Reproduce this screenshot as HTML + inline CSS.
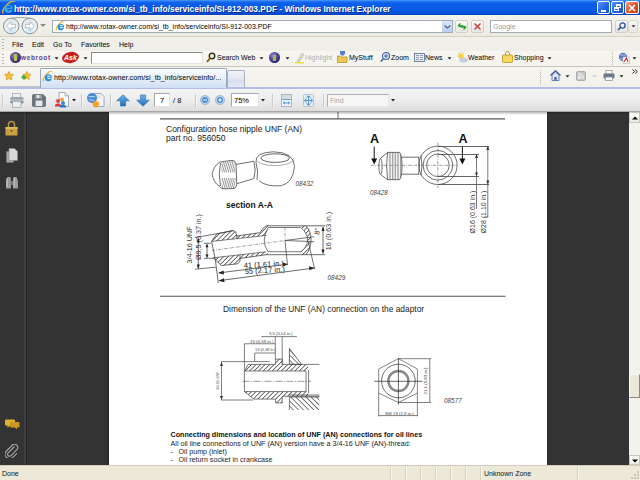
<!DOCTYPE html>
<html><head><meta charset="utf-8">
<style>
*{margin:0;padding:0;box-sizing:border-box}
html,body{width:640px;height:480px;overflow:hidden;background:#fff;font-family:"Liberation Sans",sans-serif}
.a{position:absolute}
.t{position:absolute;white-space:nowrap;line-height:1}
#title{left:0;top:0;width:640px;height:15px;background:linear-gradient(#4a9cff 0px,#2272f2 1.5px,#0c5fea 3px,#0a5ae6 10px,#0650dc 13px,#0040c0 15px)}
#title:after{content:"";position:absolute;left:0;top:15px;width:640px;height:1px;background:#f8f6e8}
#addr{left:0;top:16px;width:640px;height:20px;background:linear-gradient(#f3f2ec,#ecebe3)}
#menu{left:0;top:36px;width:640px;height:31px;background:linear-gradient(#f1f0ea 0,#efeee8 14px,#f6f5f0 14px,#f4f3ee);border-top:1px solid #d6d2c0;border-bottom:1px solid #c8c6ba}
#tabs{left:0;top:67px;width:640px;height:22px;background:linear-gradient(#f6f5f0,#f1f0ea);border-bottom:2px solid #b4bce6}
#pdftb{left:0;top:89px;width:640px;height:23px;background:linear-gradient(#f4f4f4,#ededed 50%,#dedede);border-bottom:1px solid #a8a8a8}
#content{left:0;top:112px;width:640px;height:354px;background:#333}
#status{left:0;top:465px;width:640px;height:15px;background:#ece9d8;border-top:1px solid #d0cdbd}
#page{left:109px;top:112px;width:438px;height:353px;background:#fff}
#scroll{left:629px;top:112px;width:11px;height:353px;background:#f3f2ec}
</style></head><body>
<div id="title" class="a"></div>
<!-- TITLE BAR -->
<svg class="a" style="left:1px;top:1px" width="14" height="14" viewBox="0 0 14 14">
 <path d="M2.2 12.5c-1.6-1.6 0.5-6 4.5-9.5 3-2.6 6-3.6 6.7-2.4" fill="none" stroke="#e8b23a" stroke-width="1.4"/>
 <path d="M3.5 7.5a4 3.8 0 1 1 8 0.4H6.2a1.9 1.6 0 0 0 3.6 0.8h1.6a4 3.8 0 0 1-7.9-1.2z" fill="#3aa8f0"/>
 <rect x="6" y="5.4" width="3.8" height="1.3" fill="#0054e3"/>
</svg>
<div class="t" style="left:14px;top:4.6px;font-size:8.4px;letter-spacing:0px;font-weight:bold;color:#fff;text-shadow:1px 1px 0 #0a2a8a">http://www.rotax-owner.com/si_tb_info/serviceinfo/SI-912-003.PDF - Windows Internet Explorer</div>
<div class="a" style="left:597px;top:1px;width:13px;height:13px;border:1px solid #fff;border-radius:2px;background:linear-gradient(135deg,#5a93ff,#2163e6 60%,#1a55d0)"><div class="a" style="left:3px;top:8px;width:5px;height:2px;background:#fff"></div></div>
<div class="a" style="left:611px;top:1px;width:13px;height:13px;border:1px solid #fff;border-radius:2px;background:linear-gradient(135deg,#5a93ff,#2163e6 60%,#1a55d0)"><div class="a" style="left:4px;top:2px;width:5px;height:4px;border:1px solid #fff;border-top-width:2px"></div><div class="a" style="left:2px;top:5px;width:5px;height:4px;border:1px solid #fff;border-top-width:2px;background:#2a6ae8"></div></div>
<div class="a" style="left:625px;top:1px;width:14px;height:13px;border:1px solid #fff;border-radius:2px;background:linear-gradient(135deg,#f0a080,#e0502a 55%,#c84018)"><svg class="a" style="left:2px;top:2px" width="8" height="8"><path d="M1 1L7 7M7 1L1 7" stroke="#fff" stroke-width="1.6"/></svg></div>

<div id="addr" class="a"></div>

<!-- ADDRESS ROW -->
<svg class="a" style="left:2px;top:17px" width="37" height="18" viewBox="0 0 37 18">
<defs><radialGradient id="bfg" cx="50%" cy="80%" r="60%"><stop offset="0" stop-color="#c4e6f4"/><stop offset="0.6" stop-color="#eef5f8"/><stop offset="1" stop-color="#e4e9ec"/></radialGradient></defs>
<path d="M9 1.2Q18.5 -0.5 28 1.2" stroke="#9aa0a6" stroke-width="1" fill="none"/>
<circle cx="9.2" cy="9" r="7.8" fill="url(#bfg)" stroke="#8e949a" stroke-width="1"/>
<circle cx="27.8" cy="9" r="7.8" fill="url(#bfg)" stroke="#8e949a" stroke-width="1"/>
<path d="M4.5 9L9 4.8V7.3H13.5V10.7H9V13.2z" fill="#fff" stroke="#a4acb4" stroke-width="0.8"/>
<path d="M32.5 9L28 4.8V7.3H23.5V10.7H28V13.2z" fill="#fff" stroke="#a4acb4" stroke-width="0.8"/>
</svg>
<svg class="a" style="left:40px;top:24px" width="6" height="4"><path d="M0 0h6L3 3z" fill="#8a8a8a"/></svg>
<div class="a" style="left:52px;top:20px;width:401px;height:13px;border:1px solid #a0aab8;background:#fff"></div>
<svg class="a" style="left:55px;top:21px" width="11" height="11" viewBox="0 0 14 14"><path d="M2 12c-1.5-1.5 0.5-6 4.5-9.5 3-2.6 6-3.6 6.7-2.4" fill="none" stroke="#e8b23a" stroke-width="1.5"/><path d="M3.5 7.5a4 3.8 0 1 1 8 0.4H6.2a1.9 1.6 0 0 0 3.6 0.8h1.6a4 3.8 0 0 1-7.9-1.2z" fill="#1f8fe0"/><rect x="6" y="5.4" width="3.8" height="1.3" fill="#fff"/></svg>
<div class="t" style="left:66px;top:23px;font-size:7px;color:#000">http://www.rotax-owner.com/si_tb_info/serviceinfo/SI-912-003.PDF</div>
<div class="a" style="left:442px;top:21px;width:10px;height:11px;background:linear-gradient(#dce6fc,#b9cdf6);border-left:1px solid #c8d4ee"></div>
<svg class="a" style="left:444px;top:25px" width="7" height="4"><path d="M0.5 0.5L3.5 3L6.5 0.5" stroke="#4d6185" stroke-width="1.3" fill="none"/></svg>
<div class="a" style="left:455px;top:20px;width:13px;height:13px;border:1px solid #d0d0c8;border-radius:2px;background:linear-gradient(#fafaf8,#e8e7e0)"></div>
<svg class="a" style="left:457px;top:22px" width="10" height="9"><path d="M1 4l2.5-2.5M1 4l3 1M1 4h5" stroke="#2a9a2a" stroke-width="1.3" fill="none"/><path d="M9 5l-2.5 2.5M9 5l-3-1M9 5H4" stroke="#2a9a2a" stroke-width="1.3" fill="none"/></svg>
<div class="a" style="left:471px;top:20px;width:13px;height:13px;border:1px solid #d0d0c8;border-radius:2px;background:linear-gradient(#fafaf8,#e8e7e0)"></div>
<svg class="a" style="left:473px;top:22px" width="9" height="9"><path d="M1.5 1.5L7.5 7.5M7.5 1.5L1.5 7.5" stroke="#c8383a" stroke-width="1.4"/></svg>
<div class="a" style="left:490px;top:20px;width:122px;height:13px;border:1px solid #a5acb5;background:#fff"></div>
<div class="t" style="left:493px;top:23px;font-size:7px;color:#9a9a9a">Google</div>
<div class="a" style="left:615px;top:20px;width:13px;height:13px;border:1px solid #d0d0c8;border-radius:2px;background:linear-gradient(#fafaf8,#e4e3dc)"></div>
<svg class="a" style="left:617px;top:22px" width="9" height="9"><circle cx="5.5" cy="3.5" r="2.6" stroke="#2a4fa0" stroke-width="1.3" fill="none"/><path d="M3.7 5.3L1 8" stroke="#2a4fa0" stroke-width="1.6"/></svg>
<div class="a" style="left:628px;top:20px;width:10px;height:13px;border:1px solid #d8d8d0;border-radius:2px;background:linear-gradient(#fafaf8,#e8e7e0)"></div>
<svg class="a" style="left:631px;top:25px" width="5" height="3"><path d="M0.5 0.2h4L2.5 2.6z" fill="#333"/></svg>

<div id="menu" class="a"></div>

<!-- MENU + TOOLBAR -->
<svg class="a" style="left:2px;top:39px" width="3" height="26"><g fill="#b8b6a8"><rect x="0" y="0" width="2" height="1"/><rect x="0" y="3" width="2" height="1"/><rect x="0" y="6" width="2" height="1"/><rect x="0" y="9" width="2" height="1"/><rect x="0" y="15" width="2" height="1"/><rect x="0" y="18" width="2" height="1"/><rect x="0" y="21" width="2" height="1"/><rect x="0" y="24" width="2" height="1"/></g></svg>
<div class="t" style="left:12px;top:41px;font-size:7px;color:#000">File</div>
<div class="t" style="left:32px;top:41px;font-size:7px;color:#000">Edit</div>
<div class="t" style="left:53px;top:41px;font-size:7px;color:#000">Go To</div>
<div class="t" style="left:81px;top:41px;font-size:7px;color:#000">Favorites</div>
<div class="t" style="left:119px;top:41px;font-size:7px;color:#000">Help</div>
<div class="a" style="left:10px;top:52px;width:11px;height:11px;border-radius:50%;background:radial-gradient(circle at 40% 35%,#9a7ac8,#4a2a80 60%,#2a1450)"></div>
<div class="a" style="left:14px;top:54px;width:3px;height:7px;background:#a8d040;border-radius:1px"></div>
<div class="t" style="left:21px;top:55px;font-size:6.4px;font-weight:bold;color:#5a3a8a;letter-spacing:0.7px">webroot</div>
<svg class="a" style="left:54px;top:57px" width="5" height="3"><path d="M0.5 0.2h4L2.5 2.6z" fill="#222"/></svg>
<div class="a" style="left:62px;top:52px;width:17px;height:11px;border-radius:50%;background:#c8201e;transform:rotate(-10deg)"></div>
<div class="t" style="left:64px;top:54px;font-size:7px;font-weight:bold;font-style:italic;color:#fff">Ask</div>
<svg class="a" style="left:83px;top:57px" width="5" height="3"><path d="M0.5 0.2h4L2.5 2.6z" fill="#222"/></svg>
<div class="a" style="left:91px;top:52px;width:112px;height:12px;background:#fff;border-top:1px solid #8a8a86;border-left:1px solid #8a8a86;border-right:1px solid #e6e4dc;border-bottom:1px solid #e6e4dc"></div>
<svg class="a" style="left:206px;top:52px" width="10" height="11"><circle cx="6" cy="4" r="2.8" stroke="#222" stroke-width="1.3" fill="#f0e6b0"/><path d="M4 6L1 10" stroke="#8a5a10" stroke-width="1.8"/></svg>
<div class="t" style="left:217px;top:54px;font-size:7px;color:#000">Search Web</div>
<svg class="a" style="left:259px;top:57px" width="5" height="3"><path d="M0.5 0.2h4L2.5 2.6z" fill="#222"/></svg>
<div class="a" style="left:269px;top:52px;width:11px;height:11px;border-radius:50%;background:radial-gradient(circle at 40% 35%,#9a8ad8,#3a2a80 60%,#1a1050)"></div>
<div class="a" style="left:273px;top:55px;width:3px;height:6px;background:#9ac040"></div>
<svg class="a" style="left:285px;top:57px" width="5" height="3"><path d="M0.5 0.2h4L2.5 2.6z" fill="#222"/></svg>
<svg class="a" style="left:295px;top:51px" width="10" height="13"><path d="M2 10L7 2l2 1.5L4 11z" fill="#d8d8d0" stroke="#b0b0a8" stroke-width="0.6"/><rect x="0" y="11" width="9" height="1.5" fill="#e8e030"/></svg>
<div class="t" style="left:305px;top:54px;font-size:7px;color:#b0b0b0">Highlight</div>
<svg class="a" style="left:337px;top:51px" width="11" height="12"><path d="M3 0h5v3l-2.5 2L3 3z" fill="#5a7ad0"/><path d="M0.5 5h3l1 1h5.5v5.5h-9.5z" fill="#f0c850" stroke="#b08820" stroke-width="0.7"/></svg>
<div class="t" style="left:349px;top:54px;font-size:7px;color:#000">MyStuff</div>
<svg class="a" style="left:380px;top:51px" width="10" height="12"><circle cx="6" cy="5" r="3.5" stroke="#3a5a9a" stroke-width="1.1" fill="#dfeaf8"/><path d="M4 5h4M6 3v4" stroke="#3a5a9a" stroke-width="0.9"/><path d="M3.5 7.5L0.8 10.5" stroke="#3a5a9a" stroke-width="1.5"/></svg>
<div class="t" style="left:391px;top:54px;font-size:7px;color:#000">Zoom</div>
<svg class="a" style="left:414px;top:53px" width="11" height="9"><rect x="0.5" y="0.5" width="10" height="8" fill="#e8ecf4" stroke="#5a6a8a" stroke-width="0.8"/><path d="M2 2.5h3M2 4.5h3M2 6.5h3M6 2.5h3M6 4.5h3M6 6.5h3" stroke="#6a7a9a" stroke-width="0.7"/></svg>
<div class="t" style="left:425px;top:54px;font-size:7px;color:#000">News</div>
<svg class="a" style="left:447px;top:57px" width="5" height="3"><path d="M0.5 0.2h4L2.5 2.6z" fill="#222"/></svg>
<svg class="a" style="left:457px;top:51px" width="11" height="12"><circle cx="4" cy="5" r="2.6" fill="#f5d040"/><path d="M4 0.5v1.5M0 5h1.5M1 2l1 1M7 2l-1 1" stroke="#e8b020" stroke-width="0.8"/><ellipse cx="6.5" cy="9" rx="4.3" ry="2.5" fill="#c8ccd8"/></svg>
<div class="t" style="left:468px;top:54px;font-size:7px;color:#000">Weather</div>
<svg class="a" style="left:502px;top:51px" width="11" height="12"><path d="M3.5 4V2.5a2 2 0 0 1 4 0V4" stroke="#a08020" stroke-width="0.8" fill="none"/><rect x="0.5" y="4" width="10" height="7.5" rx="1" fill="#f6d860" stroke="#b89020" stroke-width="0.8"/></svg>
<div class="t" style="left:514px;top:54px;font-size:7px;color:#000">Shopping</div>
<svg class="a" style="left:547px;top:57px" width="5" height="3"><path d="M0.5 0.2h4L2.5 2.6z" fill="#222"/></svg>
<svg class="a" style="left:612px;top:52px" width="2" height="13"><g fill="#b8b6a8"><rect y="0" width="1" height="1"/><rect y="2" width="1" height="1"/><rect y="4" width="1" height="1"/><rect y="6" width="1" height="1"/><rect y="8" width="1" height="1"/><rect y="10" width="1" height="1"/><rect y="12" width="1" height="1"/></g></svg>
<svg class="a" style="left:618px;top:52px" width="12" height="12"><circle cx="5" cy="5" r="4.2" fill="#5a7ac8"/><path d="M2 3h6M2 7h6" stroke="#c8d8f0" stroke-width="0.8"/><path d="M5 5h6.5v6.5H5z" fill="#fff" stroke="#b0b0b0" stroke-width="0.6"/><path d="M6 10l2.5-4L10 10" stroke="#d82020" stroke-width="1.1" fill="none"/></svg>
<svg class="a" style="left:632px;top:57px" width="5" height="3"><path d="M0.5 0.2h4L2.5 2.6z" fill="#222"/></svg>

<div id="tabs" class="a"></div>

<!-- TAB ROW -->
<div class="a" style="left:0;top:67px;width:40px;height:20px;border-bottom:1px solid #c4c4c0"></div>
<svg class="a" style="left:4px;top:71px" width="10" height="10" viewBox="0 0 24 24"><path d="M12 1l3.2 7 7.6.8-5.7 5.1 1.6 7.5L12 17.6 5.3 21.4l1.6-7.5L1.2 8.8 8.8 8z" fill="#f6c028" stroke="#d08a10" stroke-width="1.4"/></svg>
<svg class="a" style="left:21px;top:71px" width="10" height="10" viewBox="0 0 24 24"><path d="M14 1l3 6.5 7 .8-5.3 4.8 1.5 7L14 16.6 7.8 20.1l1.5-7L4 8.3 11 7.5z" fill="#f6c028" stroke="#d08a10" stroke-width="1.4"/><path d="M1 15h11M6.5 9.5v11" stroke="#38b838" stroke-width="4.5"/></svg>
<div class="a" style="left:40px;top:68px;width:187px;height:20px;border:1px solid #9aa6bc;border-bottom:none;border-radius:2px 2px 0 0;background:linear-gradient(#fbfdff,#e8f0fa 45%,#cfdff4)"></div>
<svg class="a" style="left:42px;top:71px" width="12" height="12" viewBox="0 0 14 14"><path d="M2 12c-1.5-1.5 0.5-6 4.5-9.5 3-2.6 6-3.6 6.7-2.4" fill="none" stroke="#e8b23a" stroke-width="1.5"/><path d="M3.5 7.5a4 3.8 0 1 1 8 0.4H6.2a1.9 1.6 0 0 0 3.6 0.8h1.6a4 3.8 0 0 1-7.9-1.2z" fill="#1f8fe0"/><rect x="6" y="5.4" width="3.8" height="1.3" fill="#fff"/></svg>
<div class="t" style="left:54px;top:74px;font-size:7.2px;letter-spacing:0.04px;color:#000">http://www.rotax-owner.com/si_tb_info/serviceinfo/...</div>
<div class="a" style="left:227px;top:70px;width:18px;height:17px;border:1px solid #a8b0c0;border-bottom:none;border-radius:2px 2px 0 0;background:linear-gradient(#f2f3f8,#e4e6f2 50%,#d8dcee 55%,#e6e8f4)"></div>
<svg class="a" style="left:540px;top:70px" width="2" height="15"><g fill="#b8b6a8"><rect y="0" width="1" height="1"/><rect y="2" width="1" height="1"/><rect y="4" width="1" height="1"/><rect y="6" width="1" height="1"/><rect y="8" width="1" height="1"/><rect y="10" width="1" height="1"/><rect y="12" width="1" height="1"/><rect y="14" width="1" height="1"/></g></svg>
<svg class="a" style="left:550px;top:70px" width="11" height="11"><path d="M0.5 5.5L5.5 0.8 10.5 5.5" fill="none" stroke="#3a5aa0" stroke-width="1.3"/><path d="M2 5v5.5h7V5L5.5 2z" fill="#dfe8f8" stroke="#4a68a8" stroke-width="0.8"/><rect x="4.3" y="7" width="2.4" height="3.5" fill="#4a68a8"/></svg>
<svg class="a" style="left:565px;top:75px" width="5" height="3"><path d="M0.5 0.2h4L2.5 2.6z" fill="#222"/></svg>
<svg class="a" style="left:576px;top:71px" width="10" height="10"><rect x="0.5" y="0.5" width="9" height="9" rx="1.5" fill="#c8c8c8" stroke="#a0a0a0" stroke-width="0.8"/><circle cx="3" cy="7" r="1" fill="#fff"/><path d="M2.5 4.5a3 3 0 0 1 3 3M2.5 2.5a5 5 0 0 1 5 5" stroke="#fff" stroke-width="0.9" fill="none"/></svg>
<svg class="a" style="left:592px;top:75px" width="5" height="3"><path d="M0.5 0.2h4L2.5 2.6z" fill="#c8c8c8"/></svg>
<svg class="a" style="left:603px;top:70px" width="12" height="11"><rect x="3" y="0.5" width="6" height="3.5" fill="#fff" stroke="#8a8a8a" stroke-width="0.7"/><rect x="0.5" y="3.5" width="11" height="5" rx="1" fill="#6a7a8a"/><rect x="2.5" y="7" width="7" height="3.5" fill="#f4f4f4" stroke="#8a8a8a" stroke-width="0.7"/></svg>
<svg class="a" style="left:619px;top:75px" width="5" height="3"><path d="M0.5 0.2h4L2.5 2.6z" fill="#222"/></svg>
<svg class="a" style="left:632px;top:69px" width="6" height="5"><path d="M0.5 0.5L2.6 2.5 0.5 4.5M3.2 0.5L5.3 2.5 3.2 4.5" stroke="#222" stroke-width="1" fill="none"/></svg>

<div id="pdftb" class="a"></div>

<!-- PDF TOOLBAR -->
<div class="a" style="left:2px;top:94px;width:2px;height:13px;border-left:1px solid #c8c8c8;border-right:1px solid #f6f6f6"></div>
<svg class="a" style="left:10px;top:93px" width="14" height="15"><defs><linearGradient id="pg" x1="0" y1="0" x2="0" y2="1"><stop offset="0" stop-color="#8a9098"/><stop offset="0.5" stop-color="#c0c4c8"/><stop offset="1" stop-color="#5a6068"/></linearGradient></defs><rect x="2.5" y="0.5" width="8" height="4.5" fill="#eef0f0" stroke="#a0a4a8" stroke-width="0.7"/><rect x="0.3" y="4.3" width="13.2" height="6" rx="1" fill="url(#pg)"/><rect x="2.5" y="8.3" width="8.5" height="6" fill="#e6f0ec" stroke="#9aa4a8" stroke-width="0.7"/></svg>
<svg class="a" style="left:32px;top:94px" width="14" height="13"><path d="M0.5 1.5a1 1 0 0 1 1-1h9.5l2.5 2.5v8.5a1 1 0 0 1-1 1h-11a1 1 0 0 1-1-1z" fill="#6a7078" stroke="#50565c" stroke-width="0.6"/><rect x="3" y="0.8" width="7" height="4" fill="#9aa0a6"/><rect x="4.8" y="1.2" width="2.5" height="2.5" fill="#f4f4f4"/><rect x="3.5" y="6.5" width="7" height="5.5" fill="#dfe8f0"/></svg>
<svg class="a" style="left:54px;top:92px" width="15" height="16"><path d="M5 0.5h6l3.5 3.5v10.5H5z" fill="#fafbfc" stroke="#8a98a8" stroke-width="0.8"/><path d="M11 0.5V4h3.5" fill="#dde4ec" stroke="#8a98a8" stroke-width="0.6"/><circle cx="4" cy="9" r="2" fill="#e04a4a"/><path d="M0.8 14.5a3.2 3 0 0 1 6.4 0z" fill="#d83a3a"/><circle cx="8" cy="7.5" r="2" fill="#f0a040"/><circle cx="9" cy="11" r="2" fill="#3a88d8"/><path d="M5.8 15.5a3.2 3 0 0 1 6.4 0z" fill="#2a78c8"/></svg>
<svg class="a" style="left:72px;top:99px" width="4" height="3"><path d="M0 0h4L2 2.5z" fill="#222"/></svg>
<div class="a" style="left:81px;top:94px;width:2px;height:13px;border-left:1px solid #c8c8c8;border-right:1px solid #f6f6f6"></div>
<svg class="a" style="left:86px;top:92px" width="19" height="16"><path d="M8 1.5h7l3 3v10H8z" fill="#f4f6f8" stroke="#8a96a4" stroke-width="0.8"/><path d="M9.5 4h6M9.5 6h6" stroke="#c0c8d0" stroke-width="0.7"/><circle cx="6" cy="6" r="5" fill="#4a8ad0"/><path d="M2.5 4.5c2 1 4 -1 6.5 0.5M3 8c2 -1 3 1 5 0" stroke="#a8d8f0" stroke-width="1.1" fill="none"/><circle cx="10" cy="12" r="2.8" fill="#f8a020"/><path d="M10 7.8v1.2M10 15v1M5.8 12H7M13 12h1.2M7 9l.8.8M13 9l-.8.8M7 15l.8-.8M13 15l-.8-.8" stroke="#f0a020" stroke-width="0.9"/></svg>
<div class="a" style="left:110px;top:94px;width:2px;height:13px;border-left:1px solid #c8c8c8;border-right:1px solid #f6f6f6"></div>
<svg class="a" style="left:116px;top:94px" width="14" height="13"><defs><linearGradient id="ag" x1="0" y1="0" x2="0" y2="1"><stop offset="0" stop-color="#6ab4ea"/><stop offset="1" stop-color="#1f70c0"/></linearGradient></defs><path d="M7 0.8L13.3 6.8H9.6V12H4.4V6.8H0.7z" fill="url(#ag)" stroke="#2a6aa8" stroke-width="0.6"/></svg>
<svg class="a" style="left:135.5px;top:94px" width="14" height="13"><path d="M7 12.2L13.3 6.2H9.6V1H4.4V6.2H0.7z" fill="url(#ag)" stroke="#2a6aa8" stroke-width="0.6"/></svg>
<div class="a" style="left:154px;top:93px;width:16px;height:14px;background:#fff;border:1px solid #a8a8a8;border-right-color:#e0e0e0;border-bottom-color:#e0e0e0"></div>
<div class="t" style="left:160px;top:97px;font-size:7.5px;color:#000">7</div>
<div class="t" style="left:173px;top:97px;font-size:7.5px;color:#000">/ 8</div>
<div class="a" style="left:195px;top:94px;width:2px;height:13px;border-left:1px solid #c8c8c8;border-right:1px solid #f6f6f6"></div>
<svg class="a" style="left:200px;top:95px" width="10" height="10"><circle cx="5" cy="5" r="4.6" fill="#b8d0e8" stroke="#8aa8c8" stroke-width="0.6"/><circle cx="5" cy="5" r="3" fill="#4a90d8"/><path d="M3.2 5h3.6" stroke="#fff" stroke-width="1"/></svg>
<svg class="a" style="left:215px;top:95px" width="10" height="10"><circle cx="5" cy="5" r="4.6" fill="#b8d0e8" stroke="#8aa8c8" stroke-width="0.6"/><circle cx="5" cy="5" r="3" fill="#4a90d8"/><path d="M3.2 5h3.6M5 3.2v3.6" stroke="#fff" stroke-width="1"/></svg>
<div class="a" style="left:231px;top:93px;width:28px;height:14px;background:#fff;border:1px solid #a8a8a8;border-right-color:#e0e0e0;border-bottom-color:#e0e0e0"></div>
<div class="t" style="left:234px;top:97px;font-size:7.5px;color:#000">75%</div>
<svg class="a" style="left:261px;top:99px" width="4" height="3"><path d="M0 0h4L2 2.5z" fill="#222"/></svg>
<div class="a" style="left:272px;top:94px;width:2px;height:13px;border-left:1px solid #c8c8c8;border-right:1px solid #f6f6f6"></div>
<svg class="a" style="left:281px;top:94px" width="11" height="13"><rect x="0.5" y="0.5" width="10" height="12" fill="#f0f4f8" stroke="#98a8b8" stroke-width="0.8"/><rect x="1" y="1" width="9" height="4" fill="#d4dce4"/><path d="M1 5.5h9" stroke="#6aa0d4" stroke-width="1"/><path d="M2.5 9h6M2.5 9l1.5-1.3M2.5 9l1.5 1.3M8.5 9l-1.5-1.3M8.5 9l-1.5 1.3" stroke="#3a88d0" stroke-width="0.9" fill="none"/></svg>
<svg class="a" style="left:303px;top:94px" width="11" height="13"><rect x="0.5" y="0.5" width="10" height="12" rx="1" fill="#e4ecf4" stroke="#a8bccc" stroke-width="0.8"/><path d="M5.5 2v9M2 6.5h7" stroke="#5a9ad0" stroke-width="1"/><path d="M3.5 3.5L5.5 1.8 7.5 3.5M3.5 9.5L5.5 11.2 7.5 9.5M3.2 4.5L1.5 6.5 3.2 8.5M7.8 4.5L9.5 6.5 7.8 8.5" stroke="#3a88d0" stroke-width="0.9" fill="none"/></svg>
<div class="a" style="left:323px;top:94px;width:2px;height:13px;border-left:1px solid #c8c8c8;border-right:1px solid #f6f6f6"></div>
<div class="a" style="left:327px;top:94px;width:62px;height:13px;background:#f6f6f6;border:1px solid #b0b0b0;border-right-color:#e8e8e8;border-bottom-color:#e8e8e8"></div>
<div class="t" style="left:330px;top:97px;font-size:7px;color:#a8a8a8">Find</div>
<svg class="a" style="left:391px;top:99px" width="4" height="3"><path d="M0 0h4L2 2.5z" fill="#222"/></svg>

<div id="content" class="a"></div>
<div id="page" class="a"></div>
<!--DOC-->
<div class="t" style="left:166px;top:125px;font-size:8.5px;font-weight:normal;font-style:normal;color:#1a1a1a;">Configuration hose nipple UNF (AN)</div>
<div class="t" style="left:166px;top:134px;font-size:8.5px;font-weight:normal;font-style:normal;color:#1a1a1a;">part no. 956050</div>
<div class="t" style="left:226px;top:201px;font-size:8.5px;font-weight:bold;font-style:normal;color:#111;">section A-A</div>
<div class="t" style="left:370px;top:133px;font-size:12.5px;font-weight:bold;font-style:normal;color:#111;">A</div>
<div class="t" style="left:458.5px;top:133px;font-size:12.5px;font-weight:bold;font-style:normal;color:#111;">A</div>
<div class="t" style="left:295.5px;top:181px;font-size:6.4px;font-weight:normal;font-style:italic;color:#444;">08432</div>
<div class="t" style="left:370px;top:190px;font-size:6.4px;font-weight:normal;font-style:italic;color:#444;">08428</div>
<div class="t" style="left:327.5px;top:274.5px;font-size:6.4px;font-weight:normal;font-style:italic;color:#444;">08429</div>
<div class="t" style="left:444px;top:397.5px;font-size:6.4px;font-weight:normal;font-style:italic;color:#444;">08577</div>
<div class="t" style="left:223px;top:305px;font-size:8.4px;font-weight:normal;font-style:normal;color:#222;">Dimension of the UNF (AN) connection on the adaptor</div>
<div class="t" style="left:170.6px;top:432px;font-size:7.15px;font-weight:bold;font-style:normal;color:#111;">Connecting dimensions and location of UNF (AN) connections for oil lines</div>
<div class="t" style="left:170.6px;top:440.5px;font-size:7.15px;font-weight:normal;font-style:normal;color:#222;">All oil line connections of UNF (AN) version have a 3/4-16 UNF (AN)-thread:</div>
<div class="t" style="left:170.6px;top:449px;font-size:7.15px;font-weight:normal;font-style:normal;color:#222;">-</div>
<div class="t" style="left:178.5px;top:449px;font-size:7.15px;font-weight:normal;font-style:normal;color:#222;">Oil pump (inlet)</div>
<div class="t" style="left:170.6px;top:456.5px;font-size:7.15px;font-weight:normal;font-style:normal;color:#222;">-</div>
<div class="t" style="left:178.5px;top:456.5px;font-size:7.15px;font-weight:normal;font-style:normal;color:#222;">Oil return socket in crankcase</div>
<div class="t" style="left:472px;top:212.2px;font-size:7px;font-weight:normal;color:#333;transform:translate(-50%,-50%) rotate(-90deg);">Ø16 (0.63 in.)</div>
<div class="t" style="left:483.3px;top:212.2px;font-size:7px;font-weight:normal;color:#333;transform:translate(-50%,-50%) rotate(-90deg);">Ø28 (1.10 in.)</div>
<div class="t" style="left:329.3px;top:231.3px;font-size:7.2px;font-weight:normal;color:#333;transform:translate(-50%,-50%) rotate(-90deg);">16 (0.63 in.)</div>
<div class="t" style="left:198.8px;top:237.1px;font-size:7.2px;font-weight:normal;color:#333;transform:translate(-50%,-50%) rotate(-90deg);">Ø9,5 (0.37 in.)</div>
<div class="t" style="left:189.6px;top:244.5px;font-size:7.2px;font-weight:normal;color:#333;transform:translate(-50%,-50%) rotate(-90deg);">3/4-16 UNF</div>
<div class="t" style="left:425.5px;top:381px;font-size:8.8px;font-weight:normal;color:#444;transform:translate(-50%,-50%) rotate(-90deg) scale(0.5);">21,1 (0,83 in.)</div>
<div class="t" style="left:385.3px;top:411px;font-size:8.6px;color:#444;transform-origin:0 0;transform:rotate(0deg) scale(0.5);">SW 19 (1.9 in.)</div>
<div class="t" style="left:269px;top:330.5px;font-size:8.4px;color:#444;transform-origin:0 0;transform:rotate(0deg) scale(0.5);">3,5 (0,14 in.)</div>
<div class="t" style="left:249.5px;top:339px;font-size:8.8px;color:#444;transform-origin:0 0;transform:rotate(0deg) scale(0.5);">15 (0,59 in.)</div>
<div class="t" style="left:218px;top:381px;font-size:7px;font-weight:normal;color:#444;transform:translate(-50%,-50%) rotate(-90deg) scale(0.5);">3/4-16 UNF</div>
<div class="t" style="left:255px;top:347.5px;font-size:7.8px;color:#444;transform-origin:0 0;transform:rotate(0deg) scale(0.5);">13 (0,38 in.)</div>
<div class="t" style="left:243.5px;top:262px;font-size:7.5px;color:#222;transform:rotate(-3.2deg);transform-origin:0 100%">41 (1.61 in.)</div>
<div class="t" style="left:245px;top:268px;font-size:7.5px;color:#222;transform:rotate(-3.2deg);transform-origin:0 100%">55 (2.17 in.)</div>
<div class="t" style="left:313px;top:234px;font-size:7px;color:#222;transform:rotate(-80deg);transform-origin:0 0">8°</div>
<svg class="a" style="left:109px;top:112px" width="438" height="353" viewBox="109 112 438 353"><defs><pattern id="h1" width="3.2" height="3.2" patternUnits="userSpaceOnUse" patternTransform="rotate(45)"><rect x="0" y="0" width="0.75" height="3.2" fill="#444"/></pattern><pattern id="h2" width="3.6" height="3.6" patternUnits="userSpaceOnUse" patternTransform="rotate(-45)"><rect x="0" y="0" width="0.7" height="3.6" fill="#444"/></pattern><pattern id="th" width="1.6" height="1.6" patternUnits="userSpaceOnUse"><rect x="0" y="0" width="0.8" height="1.6" fill="#999"/></pattern><pattern id="th2" width="1.8" height="1.8" patternUnits="userSpaceOnUse" patternTransform="rotate(15)"><rect x="0" y="0" width="0.8" height="1.8" fill="#8a8a8a"/></pattern></defs><path d="M160 118.9H505" stroke="#555" stroke-width="1.1"/><path d="M338 112V118.5" stroke="#555" stroke-width="0.9"/><path d="M160 296.3H505.5" stroke="#555" stroke-width="1.1"/><path d="M220 162Q213.5 166 212.2 174.2Q213.5 183 220 186.5" stroke="#4a4a4a" stroke-width="0.8" fill="none"/><path d="M220.5 163Q218 174 220.5 186" stroke="#4a4a4a" stroke-width="0.8" fill="none"/><path d="M221.5 162.3L234 160.8Q235.5 166 235.5 172.5H221.5zM221.5 178H235.8Q235.8 184 234.5 188.3L222 188.8z" fill="url(#th2)"/><path d="M220 162L232 160.3Q235.5 160.5 236 164L236.8 184Q236.5 188 234 188.5L224 188.9Q220.5 188.8 220 186.5" stroke="#4a4a4a" stroke-width="0.8" fill="none"/><path d="M236 164.4L253.9 161.3M236.8 183.7L253.9 178.6" stroke="#4a4a4a" stroke-width="0.8" fill="none"/><path d="M253.9 161.3Q256.5 170 253.9 178.6M256 162.4Q258.6 171 257 180" stroke="#4a4a4a" stroke-width="0.8" fill="none"/><path d="M256 162.4Q254.5 152.5 273.2 151.8Q294 152 294.5 166.4Q293 183 281.3 185.7Q266 187 259 180.6" stroke="#4a4a4a" stroke-width="0.8" fill="none"/><ellipse cx="275.2" cy="158.1" rx="14.2" ry="4.3" stroke="#555" stroke-width="0.9" fill="none"/><path d="M257 161Q262 165.5 275.2 165.6Q289 165.5 294.3 159.5" stroke="#777" stroke-width="0.6" fill="none"/><path d="M371 165.3H458" stroke="#555" stroke-width="0.6" stroke-dasharray="3 1.2 0.8 1.2" fill="none"/><path d="M437.9 142.5V188" stroke="#555" stroke-width="0.6" stroke-dasharray="3 1.2 0.8 1.2" fill="none"/><path d="M374.2 146.6V159" stroke="#111" stroke-width="1"/><path d="M371.2 158.5h6l-3 6z" fill="#111"/><path d="M462.4 146.6V159" stroke="#111" stroke-width="1"/><path d="M459.4 158.5h6l-3 6z" fill="#111"/><path d="M388 152.4H399.5Q402 155 402 166Q402 177 399.5 179.7H388z" fill="url(#th)"/><ellipse cx="380.5" cy="166.4" rx="1.6" ry="8.1" stroke="#4a4a4a" stroke-width="0.8" fill="none"/><path d="M380.5 158.3L387.6 152.4M380.5 174.5L387.6 179.7" stroke="#4a4a4a" stroke-width="0.8" fill="none"/><path d="M387.6 152.4H399.5Q402 155 402 166Q402 177 399.5 179.7H387.6Q385.5 166 387.6 152.4z" stroke="#4a4a4a" stroke-width="0.8" fill="none"/><path d="M401.6 157.2H419.2M401.6 174.2H419.2" stroke="#4a4a4a" stroke-width="0.8" fill="none"/><path d="M418.6 157Q420.5 165.5 418.6 174.5M421 155.5Q423 165.5 421 175.5" stroke="#4a4a4a" stroke-width="0.8" fill="none"/><circle cx="437.9" cy="165.3" r="19.2" stroke="#4a4a4a" stroke-width="0.8" fill="none"/><circle cx="437.9" cy="165.3" r="14.8" stroke="#4a4a4a" stroke-width="0.8" fill="none"/><circle cx="437.9" cy="165.3" r="11.3" stroke="#4a4a4a" stroke-width="0.8" fill="none"/><path d="M438 146.5H489M438 154.5H479M438 176.5H479M438 184.5H489" stroke="#555" stroke-width="0.9"/><path d="M476.5 154V208.8M487.8 146.1V217M483.7 217H487.8" stroke="#444" stroke-width="0.7"/><path d="M475 158l1.5-4 1.5 4zM475 172.6l1.5 4 1.5-4zM486.3 150.1l1.5-4 1.5 4zM486.3 180.5l1.5 4 1.5-4z" fill="#333"/><path d="M211.6 241.4L217 233.75L232.4 230.5Q235.5 231 235.8 232L236.7 236L259.7 232.7Q261.5 231.5 263 228.3L266.3 225.8H272Q267 229 266.3 235.4L211.6 241.4z" fill="url(#h1)"/><path d="M213.2 257.8L215.4 260L221.4 265.5L237.8 263.8L240 261.1V258.4L266.3 254.5H269Q266 252.5 266.3 251.8z" fill="url(#h1)"/><path d="M300.8 227.5Q307.5 233 307.5 240Q307.5 247 300.8 251.7V254.7H305.8Q311 249 311 240Q311 231 305.8 225.8H300.8z" fill="url(#h1)"/><path d="M211.6 241.4L217 233.75L232.4 230.5Q235.5 231 235.8 232L236.7 236L259.7 232.7Q261.5 231.5 263 228.3L266.3 225.8H305.8Q311 231 311 240Q311 249 305.8 254.7H266.3L240 258.4V261.1L237.8 263.8L221.4 265.5L215.4 260L213.2 257.8" stroke="#444" stroke-width="0.8" fill="none"/><path d="M211.6 241.4L266.3 235.4M213.2 257.8L266.3 251.8M236.7 236V238.6M240 258.4V254.9" stroke="#444" stroke-width="0.7" fill="none"/><path d="M268.3 227.5H300.8Q307.5 233 307.5 240Q307.5 247 300.8 251.7H268Q264 246 264.3 240Q264.5 232 268.3 227.5z" stroke="#444" stroke-width="0.7" fill="none"/><path d="M211.6 241.4L215.4 260L218.3 283" stroke="#444" stroke-width="0.8" fill="none"/><path d="M212 250.5L285 240.5" stroke="#555" stroke-width="0.6" stroke-dasharray="3 1.2 0.8 1.2" fill="none"/><path d="M285 227V240" stroke="#555" stroke-width="0.6" stroke-dasharray="3 1.2 0.8 1.2" fill="none"/><path d="M305.8 225.8H325M305.8 254.7H325M323 228V252.5" stroke="#444" stroke-width="0.8"/><path d="M321.5 231l1.5-5 1.5 5zM321.5 249.5l1.5 5 1.5-5z" fill="#222"/><path d="M198.3 240V267M207 246.5V255.5" stroke="#444" stroke-width="0.8"/><path d="M196.8 242.5l1.5-5 1.5 5zM196.8 264.5l1.5 5 1.5-5zM205.5 247.3l1.5-4 1.5 4zM205.5 254.5l1.5 4 1.5-4z" fill="#222"/><path d="M195 237.6L233.3 230.8M195 269.2L216 267.2M204 243.3H211M204 258.3H214" stroke="#444" stroke-width="0.75"/><path d="M219 272.9L287.5 264.2M219.5 280.6L314.2 268" stroke="#444" stroke-width="0.8"/><path d="M218 273L223.5 270.5L224 274.5zM218.5 280.8L224 278.3L224.5 282.3zM288 264.2L282.5 262.5L283 266.5zM314.7 268L309 266.3L309.5 270.3z" fill="#222"/><path d="M285 240.8L287.5 265M308.3 241.7L314.7 269.2M285 240.5L314.2 236.7M285 240.5L314.2 241.7" stroke="#444" stroke-width="0.75"/><path d="M261.3 336.6H296.9M244.4 343.75H275.3M254.7 353H275.3" stroke="#555" stroke-width="0.75"/><path d="M244.4 343.75V370M254.7 353V361.6M275.3 336.6V359M282.2 336.6V364.4M221 361.6H269.7M221 400H253M221.5 362V400" stroke="#555" stroke-width="0.75"/><path d="M220 366l1.5-4 1.5 4zM220 396l1.5 4 1.5-4z" fill="#333"/><path d="M244.4 371L248.1 364.4H275.6V359.1H282.2V364.4H308.2V371z" fill="url(#h1)"/><path d="M244.4 391.6L253.8 399.1H275.6V402.9H282.2V396.3H308.2V391.6z" fill="url(#h1)"/><path d="M244.4 371V391.6M244.4 371L248.1 364.4H275.6V359.1H282.2V364.4H319.4M244.4 391.6L253.8 399.1H275.6V402.9H282.2V396.3H319.4M244.4 371H306M244.4 391.6H306M306 371V391.6M308.6 370V393" stroke="#444" stroke-width="0.7" fill="none"/><path d="M242.5 381.3H311" stroke="#555" stroke-width="0.6" stroke-dasharray="7 1.5 1 1.5" fill="none"/><path d="M289.4 348.5L301.6 364.4H289.4z" fill="url(#h2)" stroke="#444" stroke-width="0.8"/><path d="M289.4 397H319.4V410H289.4z" fill="url(#h2)"/><path d="M289.4 397V410M289.4 397H319.4M289.4 395H319.4" stroke="#444" stroke-width="0.7"/><path d="M398.4 358.7L417.4 369V393L398.4 402.5L378.7 393V369z" stroke="#555" stroke-width="0.7" fill="none"/><circle cx="398.4" cy="381" r="16.8" stroke="#4a4a4a" stroke-width="0.8" fill="none"/><circle cx="398.4" cy="381" r="10" stroke="#888" stroke-width="2.4" fill="none"/><path d="M374.4 381.3H422.5M398.4 358V404.7" stroke="#222" stroke-width="0.7"/><path d="M399 358.7H431.2M399 402.5H431.2M429.8 359V402.5M378.7 393V416.3M417.4 393V416.3M378.7 415.6H417.4" stroke="#555" stroke-width="0.75"/></svg>
<!--/DOC-->
<div id="scroll" class="a"></div>
<div id="status" class="a"></div>

<!-- LEFT NAV -->
<div class="a" style="left:24px;top:112px;width:2px;height:353px;background:#3e3e3e"></div>
<div class="a" style="left:26px;top:112px;width:1px;height:353px;background:#232323"></div>
<div class="a" style="left:107px;top:112px;width:2px;height:353px;background:#2a2a2a"></div>
<div class="a" style="left:547px;top:112px;width:1px;height:353px;background:#2a2a2a"></div>
<svg class="a" style="left:5px;top:120px" width="13" height="16"><path d="M3.5 7V4.5a3 3 0 0 1 6 0V7" stroke="#b09040" stroke-width="1.6" fill="none"/><rect x="0.5" y="7" width="12" height="8.5" fill="#c8a040"/><rect x="0.5" y="7" width="12" height="2" fill="#d8b860"/><circle cx="6.5" cy="11" r="0.9" fill="#6a5020"/></svg>
<svg class="a" style="left:6px;top:148px" width="12" height="15"><path d="M0.5 3.5h7v11h-7z" fill="#a8a8a8" stroke="#7a7a7a" stroke-width="0.6"/><path d="M3 0.5h5.5l3 3v9h-8.5z" fill="#d8d8d8" stroke="#8a8a8a" stroke-width="0.6"/></svg>
<svg class="a" style="left:5px;top:176px" width="14" height="13"><path d="M1 5l1.5-4h3L6 5v7.5H1z" fill="#9a9a9a"/><path d="M8 5l.5-4h3L13 5v7.5H8z" fill="#9a9a9a"/><rect x="5.5" y="5" width="3" height="4" fill="#7a7a7a"/><rect x="1.5" y="2" width="1.5" height="9" fill="#b8b8b8"/><rect x="8.5" y="2" width="1.5" height="9" fill="#b8b8b8"/></svg>
<svg class="a" style="left:5px;top:418px" width="15" height="12"><path d="M1 1.5h8a1 1 0 0 1 1 1v4a1 1 0 0 1-1 1H5l-2.5 2.5V7.5H1a1 1 0 0 1-1-1v-4a1 1 0 0 1 1-1z" fill="#e0b030"/><path d="M6 4h7.5a1 1 0 0 1 1 1v3.5a1 1 0 0 1-1 1H12v2l-2-2H6a1 1 0 0 1-1-1V5a1 1 0 0 1 1-1z" fill="#c89820"/></svg>
<svg class="a" style="left:5px;top:444px" width="14" height="14"><path d="M9.5 2.5L3 9a2 2 0 0 0 2.8 2.8L12 5.5a3.2 3.2 0 0 0-4.5-4.5L1.5 7a4.5 4.5 0 0 0 6.4 6.4l4-4" stroke="#a8a8a8" stroke-width="1.1" fill="none"/></svg>
<div class="a" style="left:0;top:112px;width:629px;height:3px;background:linear-gradient(rgba(0,0,0,0.28),rgba(0,0,0,0.08) 66%,rgba(0,0,0,0))"></div>
<!-- SCROLLBAR -->
<div class="a" style="left:629px;top:112px;width:11px;height:11px;border:1px solid #c9c7ba;background:linear-gradient(#fefefe,#ebe9e0)"><svg class="a" style="left:2px;top:3px" width="6" height="4"><path d="M0 3.5L3 0.5 6 3.5z" fill="#000"/></svg></div>
<div class="a" style="left:629px;top:455px;width:11px;height:10px;border:1px solid #c9c7ba;background:linear-gradient(#fefefe,#ebe9e0)"><svg class="a" style="left:2px;top:3px" width="6" height="4"><path d="M0 0.5L3 3.5 6 0.5z" fill="#000"/></svg></div>
<div class="a" style="left:629px;top:374px;width:11px;height:24px;background:#ebe8da;border-top:1px solid #f8f7f2;border-left:1px solid #fbfaf5;border-right:1px solid #8c8a80;border-bottom:1px solid #8c8a80"></div>
<!-- STATUS -->
<div class="t" style="left:2px;top:470px;font-size:7px;color:#111">Done</div>
<div class="a" style="left:390px;top:467px;width:2px;height:13px;border-left:1px solid #d4d1c0;border-right:1px solid #f8f7f0"></div>
<div class="a" style="left:405px;top:467px;width:2px;height:13px;border-left:1px solid #d4d1c0;border-right:1px solid #f8f7f0"></div>
<div class="a" style="left:420px;top:467px;width:2px;height:13px;border-left:1px solid #d4d1c0;border-right:1px solid #f8f7f0"></div>
<div class="a" style="left:435px;top:467px;width:2px;height:13px;border-left:1px solid #d4d1c0;border-right:1px solid #f8f7f0"></div>
<div class="a" style="left:450px;top:467px;width:2px;height:13px;border-left:1px solid #d4d1c0;border-right:1px solid #f8f7f0"></div>
<div class="a" style="left:465px;top:467px;width:2px;height:13px;border-left:1px solid #d4d1c0;border-right:1px solid #f8f7f0"></div>
<div class="a" style="left:480px;top:467px;width:2px;height:13px;border-left:1px solid #d4d1c0;border-right:1px solid #f8f7f0"></div>
<div class="a" style="left:577px;top:467px;width:2px;height:13px;border-left:1px solid #d4d1c0;border-right:1px solid #f8f7f0"></div>
<div class="t" style="left:484px;top:470px;font-size:7px;color:#111">Unknown Zone</div>
<svg class="a" style="left:629px;top:469px" width="11" height="11"><g fill="#c8c5b4"><rect x="8" y="2" width="2" height="2"/><rect x="5" y="5" width="2" height="2"/><rect x="8" y="5" width="2" height="2"/><rect x="2" y="8" width="2" height="2"/><rect x="5" y="8" width="2" height="2"/><rect x="8" y="8" width="2" height="2"/></g></svg>

</body></html>
